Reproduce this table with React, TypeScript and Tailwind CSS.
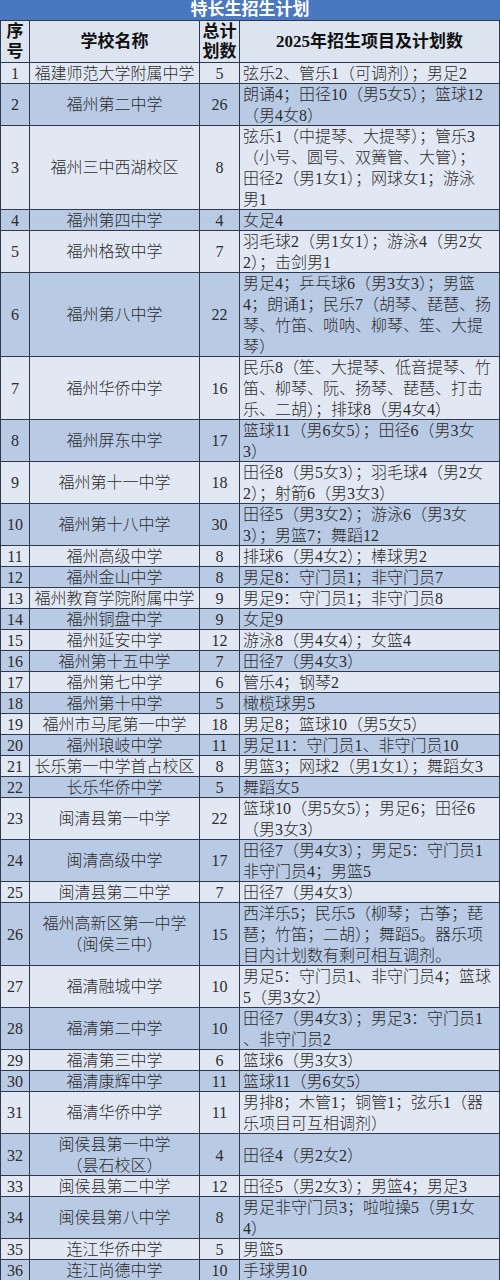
import React from "react";

type Row = { no: number; name: string[]; total: number; lines: string[] };

const rows: Row[] = [
  { no: 1, name: ["福建师范大学附属中学"], total: 5, lines: ["弦乐2、管乐1（可调剂）；男足2"] },
  { no: 2, name: ["福州第二中学"], total: 26, lines: ["朗诵4；田径10（男5女5）；篮球12", "（男4女8）"] },
  { no: 3, name: ["福州三中西湖校区"], total: 8, lines: ["弦乐1（中提琴、大提琴）；管乐3", "（小号、圆号、双簧管、大管）；", "田径2（男1女1）；网球女1；游泳", "男1"] },
  { no: 4, name: ["福州第四中学"], total: 4, lines: ["女足4"] },
  { no: 5, name: ["福州格致中学"], total: 7, lines: ["羽毛球2（男1女1）；游泳4（男2女", "2）；击剑男1"] },
  { no: 6, name: ["福州第八中学"], total: 22, lines: ["男足4；乒乓球6（男3女3）；男篮", "4；朗诵1；民乐7（胡琴、琵琶、扬", "琴、竹笛、唢呐、柳琴、笙、大提", "琴）"] },
  { no: 7, name: ["福州华侨中学"], total: 16, lines: ["民乐8（笙、大提琴、低音提琴、竹", "笛、柳琴、阮、扬琴、琵琶、打击", "乐、二胡）；排球8（男4女4）"] },
  { no: 8, name: ["福州屏东中学"], total: 17, lines: ["篮球11（男6女5）；田径6（男3女", "3）"] },
  { no: 9, name: ["福州第十一中学"], total: 18, lines: ["田径8（男5女3）；羽毛球4（男2女", "2）；射箭6（男3女3）"] },
  { no: 10, name: ["福州第十八中学"], total: 30, lines: ["田径5（男3女2）；游泳6（男3女", "3）；男篮7；舞蹈12"] },
  { no: 11, name: ["福州高级中学"], total: 8, lines: ["排球6（男4女2）；棒球男2"] },
  { no: 12, name: ["福州金山中学"], total: 8, lines: ["男足8：守门员1；非守门员7"] },
  { no: 13, name: ["福州教育学院附属中学"], total: 9, lines: ["男足9：守门员1；非守门员8"] },
  { no: 14, name: ["福州铜盘中学"], total: 9, lines: ["女足9"] },
  { no: 15, name: ["福州延安中学"], total: 12, lines: ["游泳8（男4女4）；女篮4"] },
  { no: 16, name: ["福州第十五中学"], total: 7, lines: ["田径7（男4女3）"] },
  { no: 17, name: ["福州第七中学"], total: 6, lines: ["管乐4；钢琴2"] },
  { no: 18, name: ["福州第十中学"], total: 5, lines: ["橄榄球男5"] },
  { no: 19, name: ["福州市马尾第一中学"], total: 18, lines: ["男足8；篮球10（男5女5）"] },
  { no: 20, name: ["福州琅岐中学"], total: 11, lines: ["男足11：守门员1、非守门员10"] },
  { no: 21, name: ["长乐第一中学首占校区"], total: 8, lines: ["男篮3；网球2（男1女1）；舞蹈女3"] },
  { no: 22, name: ["长乐华侨中学"], total: 5, lines: ["舞蹈女5"] },
  { no: 23, name: ["闽清县第一中学"], total: 22, lines: ["篮球10（男5女5）；男足6；田径6", "（男3女3）"] },
  { no: 24, name: ["闽清高级中学"], total: 17, lines: ["田径7（男4女3）；男足5：守门员1", "非守门员4；男篮5"] },
  { no: 25, name: ["闽清县第二中学"], total: 7, lines: ["田径7（男4女3）"] },
  { no: 26, name: ["福州高新区第一中学", "（闽侯三中）"], total: 15, lines: ["西洋乐5；民乐5（柳琴；古筝；琵", "琶；竹笛；二胡）；舞蹈5。器乐项", "目内计划数有剩可相互调剂。"] },
  { no: 27, name: ["福清融城中学"], total: 10, lines: ["男足5：守门员1、非守门员4；篮球", "5（男3女2）"] },
  { no: 28, name: ["福清第二中学"], total: 10, lines: ["田径7（男4女3）；男足3：守门员1", "、非守门员2"] },
  { no: 29, name: ["福清第三中学"], total: 6, lines: ["篮球6（男3女3）"] },
  { no: 30, name: ["福清康辉中学"], total: 11, lines: ["篮球11（男6女5）"] },
  { no: 31, name: ["福清华侨中学"], total: 11, lines: ["男排8；木管1；铜管1；弦乐1（器", "乐项目可互相调剂）"] },
  { no: 32, name: ["闽侯县第一中学", "（昙石校区）"], total: 4, lines: ["田径4（男2女2）"] },
  { no: 33, name: ["闽侯县第二中学"], total: 12, lines: ["田径5（男2女3）；男篮4；男足3"] },
  { no: 34, name: ["闽侯县第八中学"], total: 8, lines: ["男足非守门员3；啦啦操5（男1女", "4）"] },
  { no: 35, name: ["连江华侨中学"], total: 5, lines: ["男篮5"] },
  { no: 36, name: ["连江尚德中学"], total: 10, lines: ["手球男10"] },
];

const heightClass: Record<number, string> = {
  1: "h-[21px]",
  2: "h-[42px]",
  3: "h-[63px]",
  4: "h-[84px]",
};

export default function App() {
  return (
    <div className="w-[500px] bg-white font-['Liberation_Serif','Noto_Sans_CJK_SC',serif] text-[#2c2c2c]">
      <div className="h-[21px] bg-[#4a78c0] border-b border-[#2e3a4c] text-center text-white font-bold text-[17px] leading-[20px]">
        特长生招生计划
      </div>
      <div className="grid grid-cols-[30px_170px_40px_1fr] h-[42px] bg-[#dce4f0] border-b border-[#2e3a4c] font-bold text-[17px] text-[#111] leading-[20px]">
        <div className="border-l border-r border-[#2e3a4c] flex flex-col items-center justify-center">
          <span>序</span>
          <span>号</span>
        </div>
        <div className="border-r border-[#2e3a4c] flex items-center justify-center">学校名称</div>
        <div className="border-r border-[#2e3a4c] flex flex-col items-center justify-center">
          <span>总计</span>
          <span>划数</span>
        </div>
        <div className="border-r border-[#2e3a4c] flex items-center justify-center">2025年招生项目及计划数</div>
      </div>
      {rows.map((r) => {
        const n = Math.max(r.lines.length, r.name.length);
        const bg = r.no % 2 === 1 ? "bg-[#e2e8f3]" : "bg-[#b9cae5]";
        return (
          <div
            key={r.no}
            className={`grid grid-cols-[30px_170px_40px_1fr] ${heightClass[n]} ${bg} border-b border-[#2e3a4c] text-[16px] leading-[21px] font-light`}
          >
            <div className="border-l border-r border-[#2e3a4c] flex items-center justify-center">{r.no}</div>
            <div className="border-r border-[#2e3a4c] flex flex-col items-center justify-center whitespace-nowrap">
              {r.name.map((t, i) => (
                <span key={i}>{t}</span>
              ))}
            </div>
            <div className="border-r border-[#2e3a4c] flex items-center justify-center">{r.total}</div>
            <div className="border-r border-[#2e3a4c] flex flex-col justify-center pl-[3px] whitespace-nowrap overflow-hidden">
              {r.lines.map((t, i) => (
                <span key={i}>{t}</span>
              ))}
            </div>
          </div>
        );
      })}
    </div>
  );
}
